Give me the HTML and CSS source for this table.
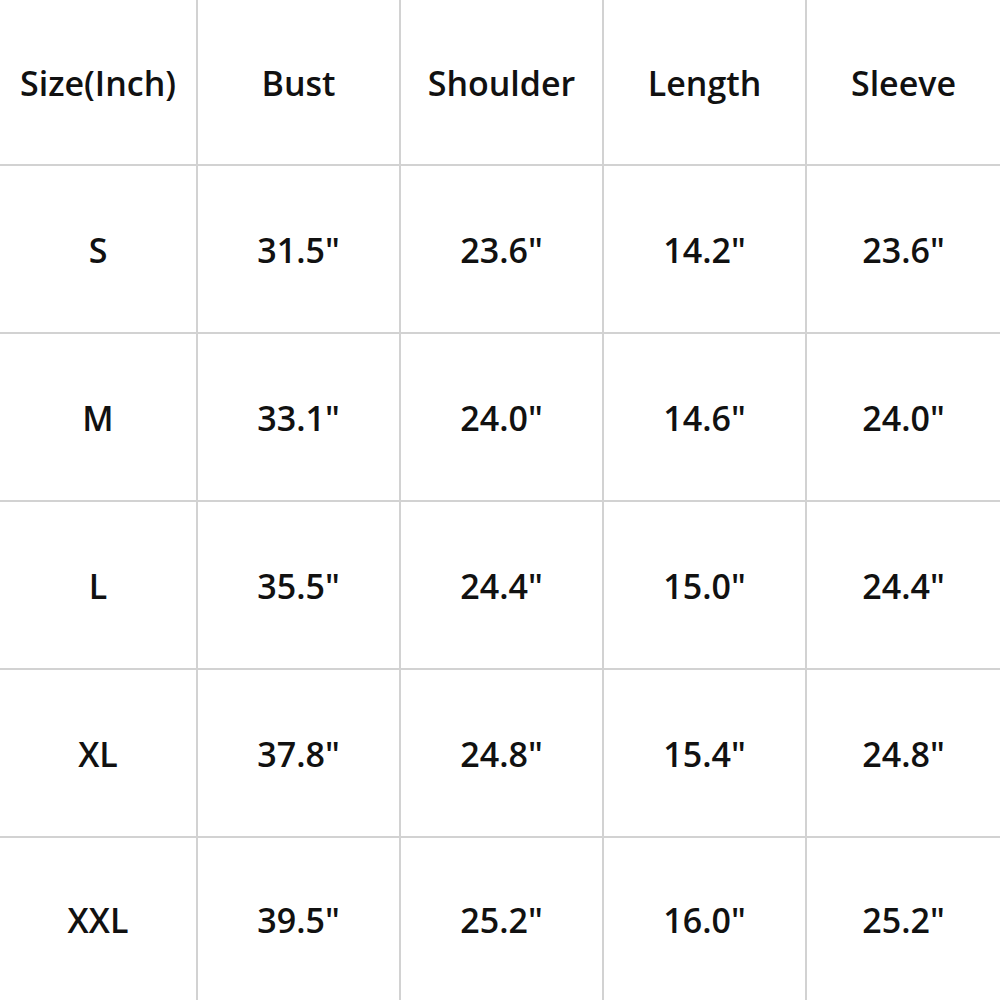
FILE: index.html
```html
<!DOCTYPE html>
<html>
<head>
<meta charset="utf-8">
<link rel="stylesheet" href="styles.css">
</head>
<body>
<div class="chart">
  <div class="cell">Size(Inch)</div><div class="cell">Bust</div><div class="cell">Shoulder</div><div class="cell">Length</div><div class="cell">Sleeve</div>
  <div class="cell">S</div><div class="cell">31.5"</div><div class="cell">23.6"</div><div class="cell">14.2"</div><div class="cell">23.6"</div>
  <div class="cell">M</div><div class="cell">33.1"</div><div class="cell">24.0"</div><div class="cell">14.6"</div><div class="cell">24.0"</div>
  <div class="cell">L</div><div class="cell">35.5"</div><div class="cell">24.4"</div><div class="cell">15.0"</div><div class="cell">24.4"</div>
  <div class="cell">XL</div><div class="cell">37.8"</div><div class="cell">24.8"</div><div class="cell">15.4"</div><div class="cell">24.8"</div>
  <div class="cell">XXL</div><div class="cell">39.5"</div><div class="cell">25.2"</div><div class="cell">16.0"</div><div class="cell">25.2"</div>
</div>
</body>
</html>
```
FILE: styles.css
```css
html, body {
  margin: 0;
  padding: 0;
  background: #ffffff;
  overflow: hidden;
}
.chart {
  width: 1000px;
  height: 1000px;
  display: grid;
  grid-template-columns: 196px 201px 201px 201px 193px;
  grid-template-rows: 164px 166px 166px 166px 166px 162px;
  gap: 2px;
  background: #d2d2d2;
  font-family: "Open Sans", "Noto Sans", "Liberation Sans", sans-serif;
  font-weight: 600;
  font-size: 34px;
  color: #111111;
}
.cell {
  background: #ffffff;
  display: flex;
  align-items: center;
  justify-content: center;
  padding-top: 2px;
  box-sizing: border-box;
}
```
